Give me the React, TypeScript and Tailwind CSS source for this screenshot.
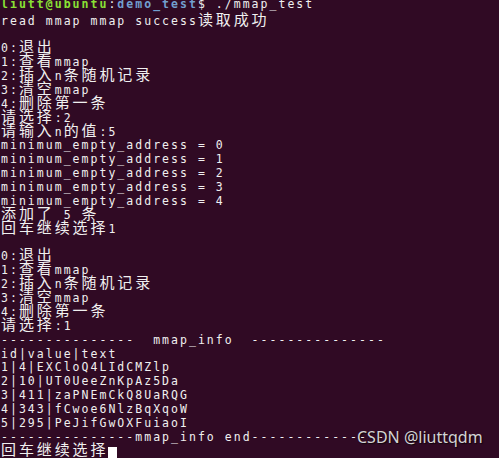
import React from "react";

// terminal cell pitch in the screenshot is ~8.95px, CJK takes two cells
const CJK = /([\u3000-\u9fff\uff00-\uffef]+)/;

const LINES = [
  "read mmap mmap success读取成功",
  "",
  "0:退出",
  "1:查看mmap",
  "2:插入n条随机记录",
  "3:清空mmap",
  "4:删除第一条",
  "请选择:2",
  "请输入n的值:5",
  "minimum_empty_address = 0",
  "minimum_empty_address = 1",
  "minimum_empty_address = 2",
  "minimum_empty_address = 3",
  "minimum_empty_address = 4",
  "添加了 5 条",
  "回车继续选择1",
  "",
  "0:退出",
  "1:查看mmap",
  "2:插入n条随机记录",
  "3:清空mmap",
  "4:删除第一条",
  "请选择:1",
  "---------------  mmap_info  ---------------",
  "id|value|text",
  "1|4|EXCloQ4LIdCMZlp",
  "2|10|UT0UeeZnKpAz5Da",
  "3|411|zaPNEmCkQ8UaRQG",
  "4|343|fCwoe6NlzBqXqoW",
  "5|295|PeJifGwOXFuiaoI",
  "---------------mmap_info end---------------",
];

function Runs({ text }: { text: string }) {
  return (
    <>
      {text.split(CJK).map((part, i) =>
        part === "" ? null : CJK.test(part) ? (
          <span
            key={i}
            className="font-['Noto_Sans_CJK_SC',sans-serif] text-[15px] leading-[8px] tracking-[2.9px]"
          >
            {part}
          </span>
        ) : (
          <span key={i}>{part}</span>
        )
      )}
    </>
  );
}

function Line({ children }: { children: React.ReactNode }) {
  return <div className="h-[13.875px] leading-[13.875px] whitespace-pre">{children}</div>;
}

export default function App() {
  return (
    <div className="relative w-[499px] h-[458px] overflow-hidden bg-[#300a24]">
      <div className="pl-[1px] text-[#f0f0f0] font-['DejaVu_Sans_Mono',monospace] text-[11.5px] tracking-[2.026px]">
        <div className="-mt-[2.4px] mb-[3.1px] h-[13.875px] leading-[13.875px] whitespace-pre">
          <span className="font-bold text-[#8ae234]">liutt@ubuntu</span>
          <span>:</span>
          <span className="font-bold text-[#729fcf]">demo_test</span>
          <span>$ ./mmap_test</span>
        </div>
        {LINES.map((l, i) => (
          <Line key={i}>
            <Runs text={l} />
          </Line>
        ))}
        <Line>
          <Runs text="回车继续选择" />
          <span className="relative top-[2px] inline-block w-[9px] h-[13px] bg-white align-top" />
        </Line>
      </div>

      <div className="absolute left-[357px] top-[427px] font-['Noto_Sans',sans-serif] text-[16px] leading-[20px] text-[#d4d4d4] [text-shadow:1px_1px_1px_rgba(0,0,0,0.7)]">
        CSDN @liuttqdm
      </div>
    </div>
  );
}
